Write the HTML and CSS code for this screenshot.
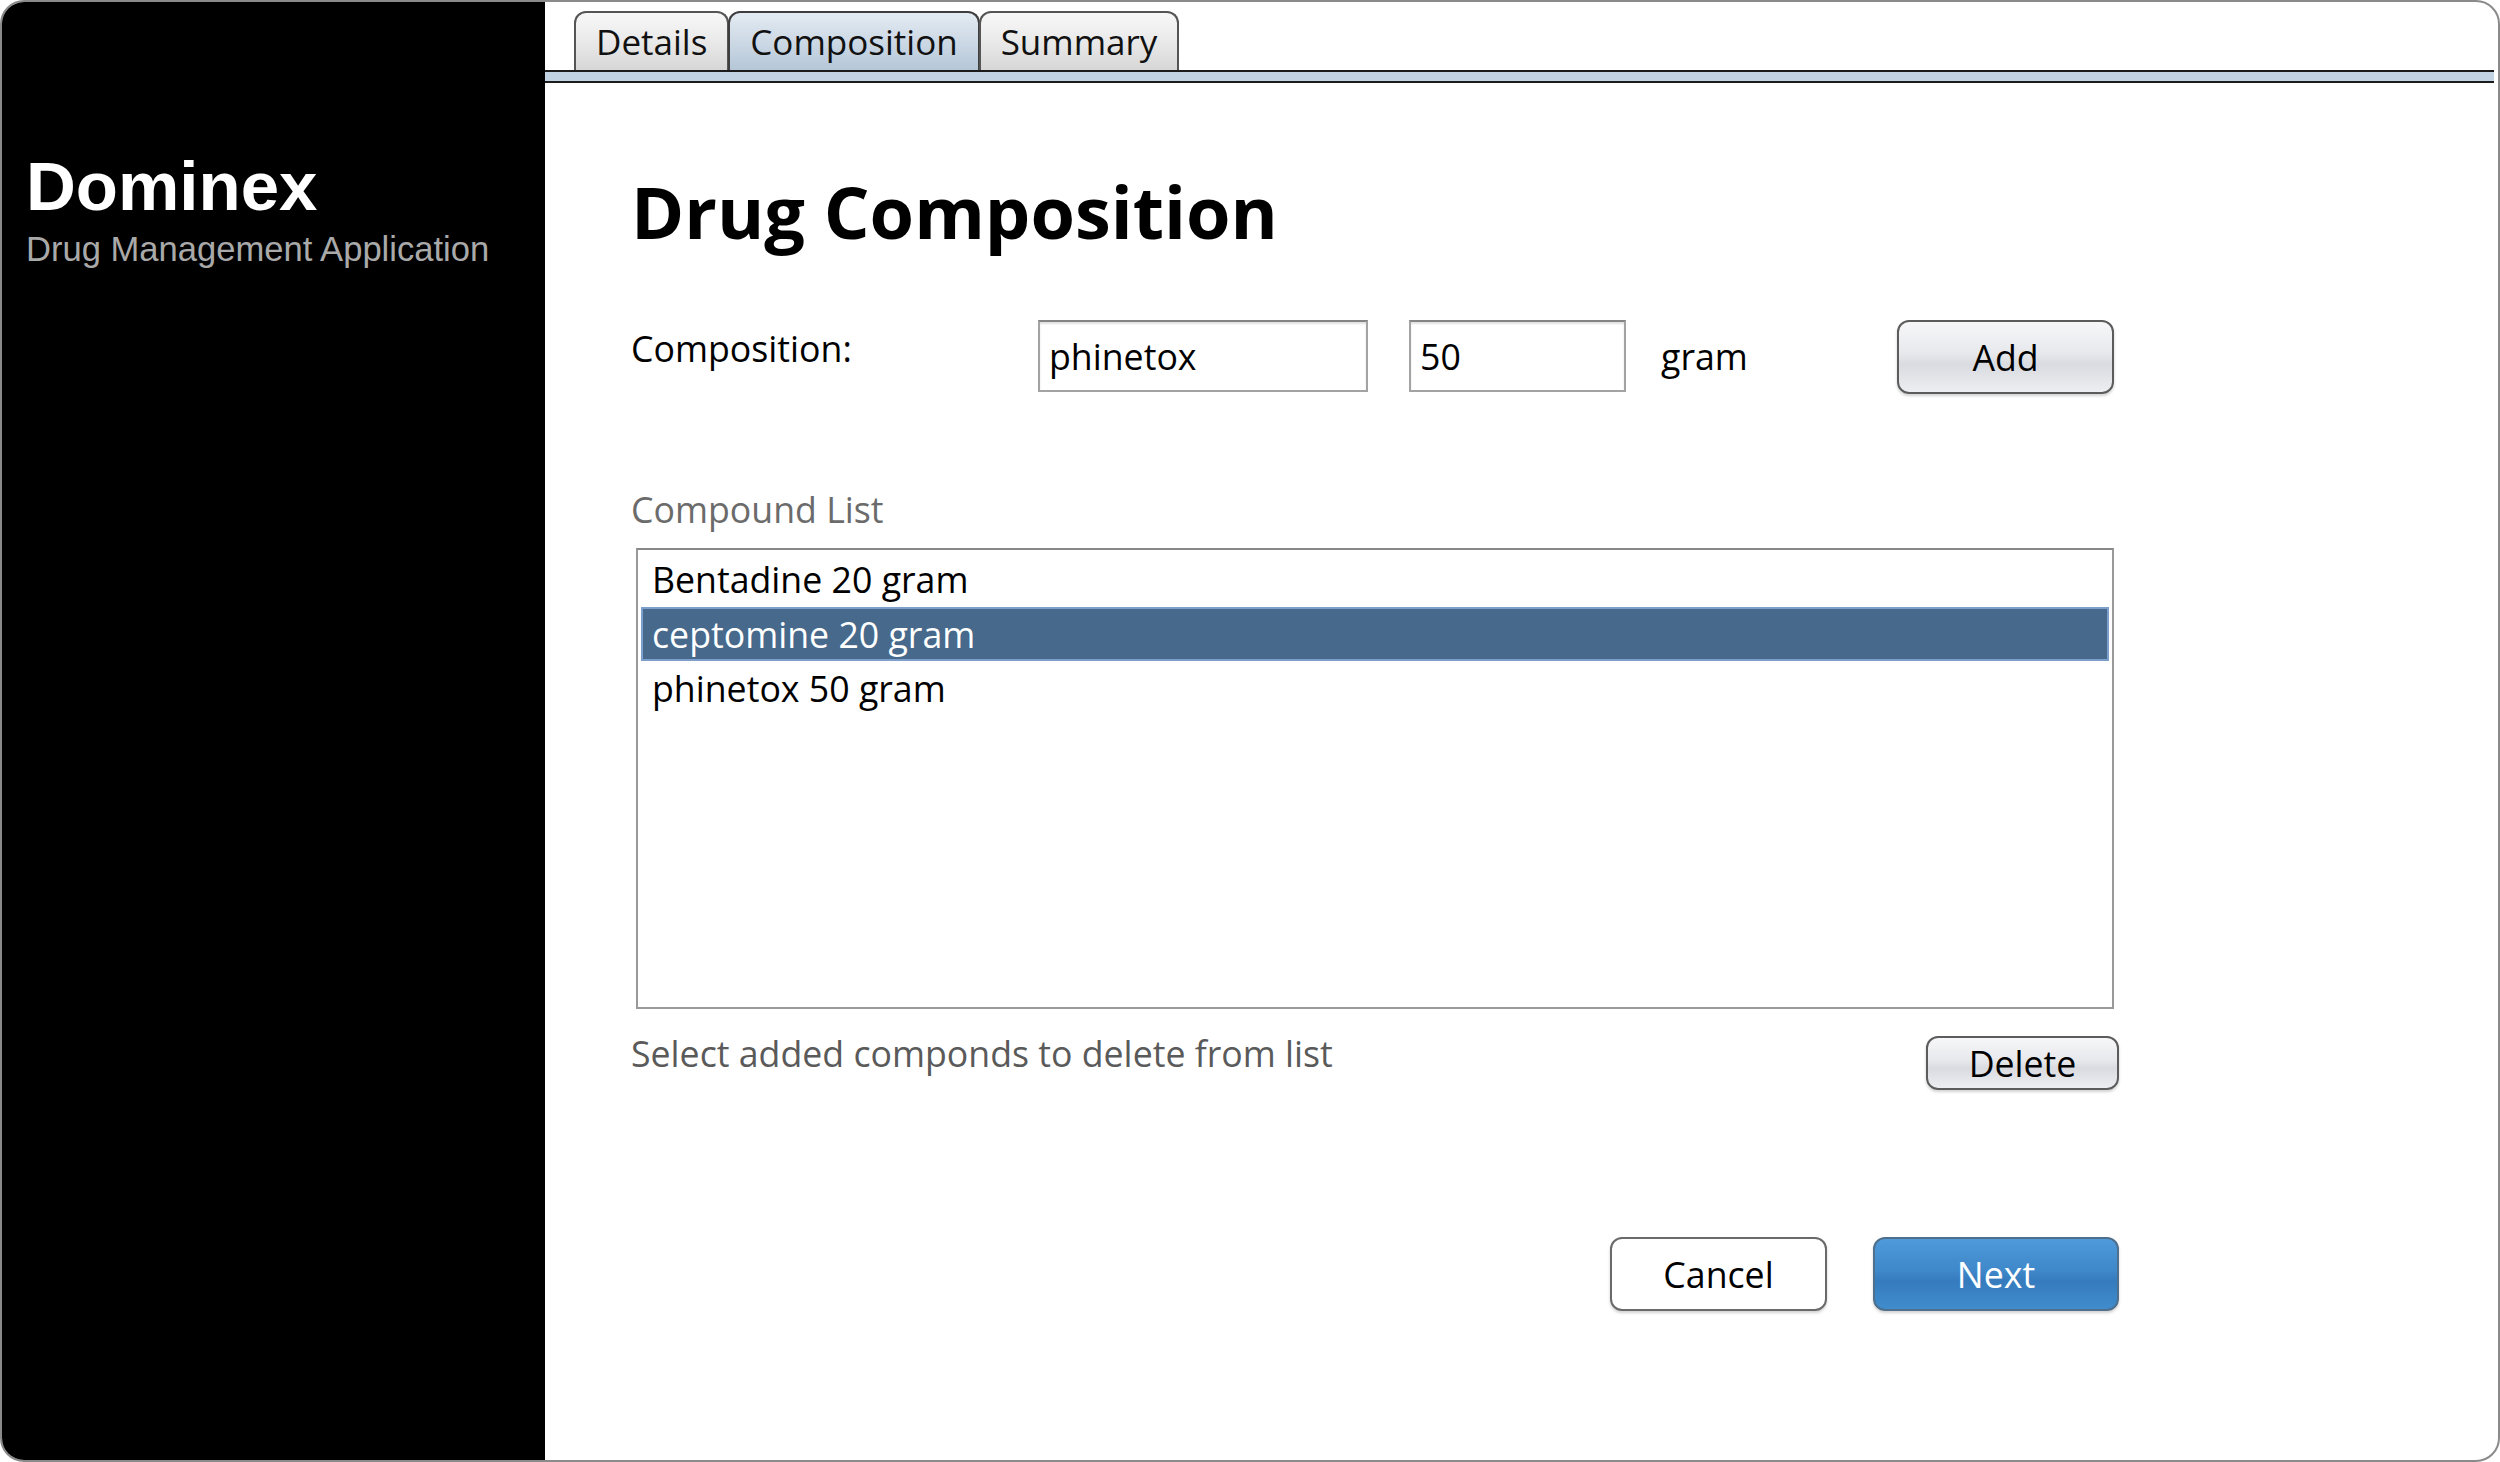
FILE: index.html
```html
<!DOCTYPE html>
<html lang="en">
<head>
    <meta charset="UTF-8">
    <meta name="viewport" content="width=device-width, initial-scale=1.0">
    <title>Dominex - Drug Composition</title>
    <link rel="stylesheet" href="styles.css">
</head>
<body>

    <div class="window">

        <!-- Left brand panel -->
        <div class="sidebar">
            <h1 class="brand">Dominex</h1>
            <p class="brand-sub">Drug Management Application</p>
        </div>

        <div class="main">

            <!-- Wizard tabs -->
            <div class="tab-strip">
                <div class="tabs">
                    <button class="tab">Details</button>
                    <button class="tab active">Composition</button>
                    <button class="tab">Summary</button>
                </div>
                <div class="tab-band"></div>
            </div>

            <div class="content">
                <h2 class="page-title">Drug Composition</h2>

                <div class="form-row">
                    <label class="field-label" for="compName">Composition:</label>
                    <input type="text" id="compName" class="text-field name-field" value="phinetox">
                    <input type="text" id="compAmount" class="text-field amount-field" value="50">
                    <span class="unit">gram</span>
                    <button class="btn btn-add">Add</button>
                </div>

                <p class="list-title">Compound List</p>
                <ul class="compound-list">
                    <li>Bentadine 20 gram</li>
                    <li class="selected">ceptomine 20 gram</li>
                    <li>phinetox 50 gram</li>
                </ul>

                <div class="hint-row">
                    <p class="hint">Select added componds to delete from list</p>
                    <button class="btn btn-delete">Delete</button>
                </div>

                <div class="footer">
                    <button class="btn btn-cancel">Cancel</button>
                    <button class="btn btn-next">Next</button>
                </div>
            </div>
        </div>
    </div>

</body>
</html>
```

FILE: styles.css
```css
body {
    margin: 0;
    background-color: #fff;
    font-family: "Open Sans", "DejaVu Sans", sans-serif;
}
.window {
    display: flex;
    width: 2500px;
    height: 1462px;
    box-sizing: border-box;
    border: 2px solid #8a8a8a;
    border-radius: 24px;
    overflow: hidden;
    background-color: #fff;
}

/* sidebar */
.sidebar {
    width: 543px;
    flex-shrink: 0;
    background-color: #000;
    padding: 150px 0 0 24px;
    box-sizing: border-box;
    font-family: "Liberation Sans", Arial, sans-serif;
}
.brand {
    margin: 0;
    color: #fff;
    font-size: 69px;
    line-height: 1;
    font-weight: bold;
}
.brand-sub {
    margin: 11px 0 0;
    color: #a9a9a9;
    font-size: 34.6px;
    line-height: 1;
}

/* main panel */
.main {
    flex: 1;
    display: flex;
    flex-direction: column;
}
.tab-strip {
    padding-top: 9px;
    padding-right: 4px;
}
.tabs {
    display: flex;
    margin-left: 29px;
}
.tab {
    height: 59px;
    padding: 0 20px;
    border: 2px solid #555;
    border-bottom: none;
    border-radius: 12px 12px 0 0;
    background: linear-gradient(#f8f8f8, #e6e6e6 60%, #d6d6d6);
    font-family: inherit;
    font-size: 35px;
    line-height: 55px;
    color: #111;
}
.tab + .tab {
    margin-left: -1px;
}
.tab.active {
    border-color: #3e3e3e;
    background: linear-gradient(#e4ebf2, #cad7e4 55%, #b5c6d8);
}
.tab-band {
    height: 9px;
    border-top: 2px solid #1c1c1c;
    border-bottom: 2px solid #1c1c1c;
    background-color: #c2d3e3;
}

.content {
    padding: 84px 0 0 86px;
    width: 1488px;
}
.page-title {
    margin: 0;
    font-size: 72px;
    line-height: 88px;
    font-weight: bold;
    color: #000;
}

/* composition entry row */
.form-row {
    display: flex;
    align-items: flex-start;
    margin-top: 65px;
}
.field-label {
    width: 407px;
    margin-top: 6px;
    font-size: 35.7px;
    line-height: 44px;
    color: #000;
}
.text-field {
    height: 72px;
    box-sizing: border-box;
    border: 2px solid #a3a3a3;
    border-top-color: #858585;
    box-shadow: inset 0 2px 2px rgba(0, 0, 0, 0.12);
    padding: 0 9px;
    font-family: inherit;
    font-size: 35.7px;
    color: #000;
    background-color: #fff;
}
.name-field {
    width: 330px;
}
.amount-field {
    width: 217px;
    margin-left: 41px;
}
.unit {
    margin-left: 35px;
    font-size: 35.7px;
    line-height: 72px;
    color: #000;
    width: 236px;
}

/* buttons */
.btn {
    height: 74px;
    box-sizing: border-box;
    border: 2px solid #5c5c5c;
    border-radius: 12px;
    font-family: inherit;
    font-size: 35.7px;
    color: #000;
    box-shadow: 0 2px 3px rgba(0, 0, 0, 0.18);
    background: linear-gradient(#f7f7f9, #e7e8ec 45%, #d9dbe0 60%, #eceef1);
    padding: 0;
}
.btn-add {
    width: 217px;
}
.btn-delete {
    width: 193px;
    height: 54px;
    margin-top: 5px;
    line-height: 48px;
}
.btn-cancel {
    width: 217px;
    background: #fff;
    border-color: #6a6a6a;
}
.btn-next {
    width: 246px;
    margin-left: 46px;
    color: #fff;
    border-color: #4f6f8c;
    background: linear-gradient(#4e9adb, #3f88ca 45%, #357bbd 60%, #408ccd);
}

/* compound list */
.list-title {
    margin: 93px 0 0;
    font-size: 35.7px;
    line-height: 44px;
    color: #6b6b6b;
}
.compound-list {
    list-style: none;
    margin: 17px 0 0 5px;
    padding: 2px 3px;
    width: 1478px;
    height: 461px;
    box-sizing: border-box;
    border: 2px solid #999;
    border-top-color: #888;
}
.compound-list li {
    height: 55px;
    line-height: 55px;
    padding-left: 11px;
    font-size: 35.7px;
    color: #000;
}
.compound-list li.selected {
    background-color: #46698c;
    box-shadow: inset 0 0 0 2px #7c9fcb;
    color: #fff;
    height: 54px;
    line-height: 54px;
}

.hint-row {
    display: flex;
    align-items: flex-start;
    justify-content: space-between;
    margin-top: 22px;
}
.hint {
    margin: 0;
    font-size: 35.7px;
    line-height: 44px;
    color: #5a5a5a;
}

.footer {
    display: flex;
    justify-content: flex-end;
    margin-top: 147px;
}
```
